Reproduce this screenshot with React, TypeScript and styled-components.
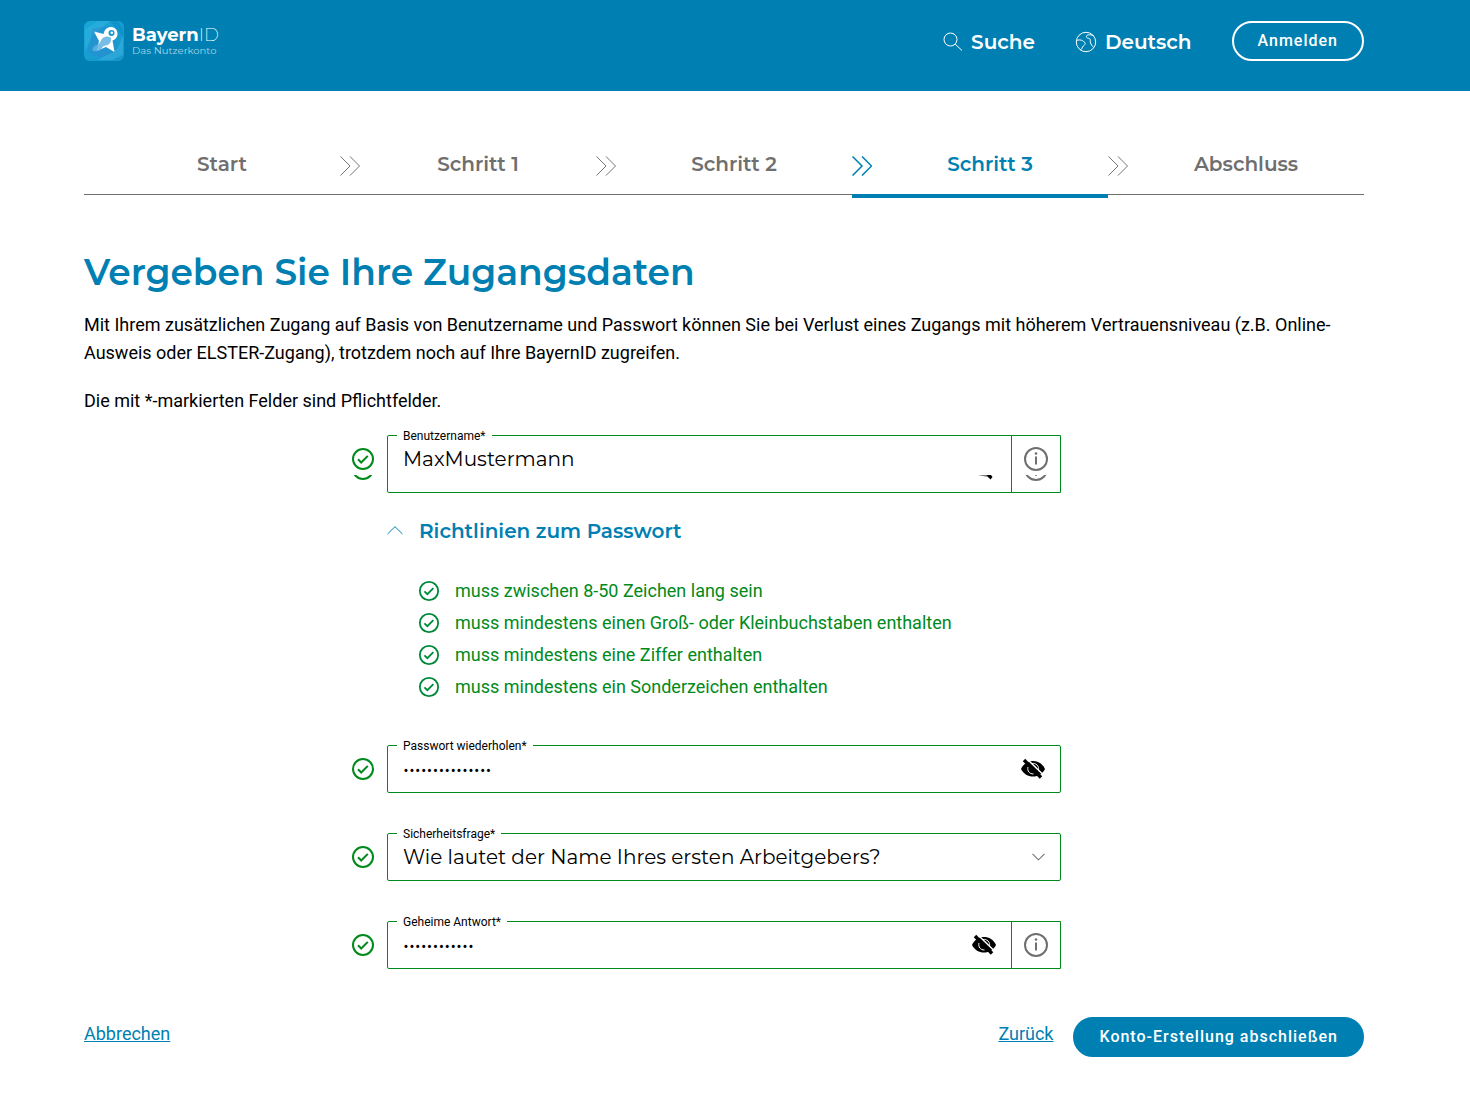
import React, { useState } from "react";
import styled, { createGlobalStyle } from "styled-components";

const blue = "#0080b2";
const green = "#008a1b";
const grey = "#6f6f6f";
const heading = `Montserrat, Inter, sans-serif`;
const body = `Roboto, sans-serif`;

const GlobalStyle = createGlobalStyle`
  *, *::before, *::after { box-sizing: border-box; }
  body { margin: 0; background: #fff; color: #000; font-family: ${body}; font-size: 18px; line-height: 28px; }
  button, input, select { font: inherit; color: inherit; margin: 0; }
  svg { display: block; flex: none; }
  p, h1, ul, ol { margin: 0; padding: 0; }
`;

const Header = styled.header`
  display: flex;
  align-items: flex-start;
  justify-content: space-between;
  padding: 21px 106px 30px 84px;
  background: ${blue};
  color: #fff;
`;

const Brand = styled.a`
  display: flex;
  align-items: center;
  gap: 8px;
  height: 40px;
  color: #fff;
  text-decoration: none;
  font-family: ${heading};
`;

const BrandText = styled.span`
  display: flex;
  flex-direction: column;
  padding-top: 2px;
`;

const BrandName = styled.span`
  font-size: 18px;
  line-height: 18px;
  font-weight: 200;
  b { font-weight: 700; }
`;

const BrandClaim = styled.span`
  font-size: 10px;
  line-height: 14px;
  font-weight: 400;
  color: #a5d3e8;
`;

const Tools = styled.nav`
  display: flex;
  align-items: center;
  gap: 40px;
  height: 40px;
`;

const ToolButton = styled.button`
  display: flex;
  align-items: center;
  gap: 8px;
  padding: 2px 0 0;
  border: 0;
  background: none;
  font: 600 20px/28px ${heading};
  cursor: pointer;
`;

const PillButton = styled.button<{ $filled?: boolean }>`
  height: 40px;
  padding: 0 24px;
  border: 2px solid ${(p) => (p.$filled ? blue : "#fff")};
  border-radius: 20px;
  background: ${(p) => (p.$filled ? blue : "transparent")};
  color: #fff;
  font: 500 16px/20px ${body};
  letter-spacing: 1px;
  cursor: pointer;
`;

const Main = styled.main`
  padding: 56px 106px 45px 84px;
`;

const Steps = styled.ol`
  display: grid;
  grid-template-columns: repeat(5, 1fr);
  align-items: start;
  list-style: none;
`;

const Step = styled.li<{ $active?: boolean }>`
  display: grid;
  grid-template-columns: 20px 1fr;
  padding: 3px 0 16px;
  border-bottom: ${(p) => (p.$active ? `4px solid ${blue}` : `1px solid ${grey}`)};
  font: 600 20px/28px ${heading};
  text-align: center;
  color: ${(p) => (p.$active ? blue : grey)};
  svg { margin-top: 6px; }
`;

const Title = styled.h1`
  margin-top: 47px;
  font: 600 36px/54px ${heading};
  color: ${blue};
`;

const Text = styled.p`
  margin-top: 12px;
  & + & { margin-top: 20px; }
`;

const Form = styled.form`
  margin-top: 20px;
`;

const Row = styled.div`
  display: grid;
  grid-template-columns: minmax(36px, 1fr) minmax(0, 674px) minmax(0, 1fr);
  & + & { margin-top: 40px; }
`;

const Status = styled.div`
  position: relative;
  justify-self: end;
  width: 24px;
  margin: 12px 12px 0 0;
`;

const Box = styled.div<{ $tall?: boolean; $square?: boolean }>`
  position: relative;
  display: flex;
  align-items: stretch;
  height: ${(p) => (p.$tall ? 58 : 48)}px;
  border: 1px solid ${green};
  border-radius: ${(p) => (p.$square ? "2px 0 0 2px" : "2px")};
`;

const Label = styled.label`
  position: absolute;
  top: -7px;
  left: 9px;
  padding: 0 6px;
  background: #fff;
  font-size: 12px;
  line-height: 14px;
`;

const Input = styled.input`
  flex: 1;
  min-width: 0;
  height: 46px;
  padding: 0 15px;
  border: 0;
  outline: 0;
  background: none;
  font: 400 20px/28px ${heading};
`;

const Select = styled.select`
  flex: 1;
  min-width: 0;
  padding: 0 15px;
  border: 0;
  outline: 0;
  appearance: none;
  background: none;
  font: 400 20px/28px ${heading};
`;

const SelectArrow = styled.span`
  display: flex;
  align-items: center;
  padding-right: 15px;
  color: ${grey};
  pointer-events: none;
`;

const IconButton = styled.button<{ $bordered?: boolean }>`
  position: relative;
  display: flex;
  align-items: flex-start;
  padding: ${(p) => (p.$bordered ? "11px 12px" : "11px 15px")};
  border: 0;
  border-left: ${(p) => (p.$bordered ? `1px solid ${green}` : "0")};
  background: none;
  cursor: pointer;
`;

const Sliver = styled.span<{ $edge: "status" | "eye" | "info" }>`
  position: absolute;
  top: ${(p) => (p.$edge === "status" ? 28 : 39)}px;
  ${(p) => ({ status: "left: 0;", eye: "right: 67px;", info: "left: 12px;" })[p.$edge]}
`;

const Rules = styled.section`
  grid-column: 2;
`;

const RulesToggle = styled.button`
  display: flex;
  align-items: center;
  gap: 16px;
  margin-top: -16px;
  padding: 0;
  border: 0;
  background: none;
  font: 600 20px/28px ${heading};
  color: ${blue};
  cursor: pointer;
`;

const RuleList = styled.ul`
  display: grid;
  gap: 4px;
  padding: 32px 0 4px 31px;
  list-style: none;
  color: ${green};
`;

const Rule = styled.li`
  display: flex;
  align-items: center;
  gap: 15px;
`;

const Actions = styled.footer`
  display: flex;
  align-items: center;
  gap: 20px;
  margin-top: 48px;
`;

const Link = styled.a<{ $push?: boolean }>`
  margin-right: ${(p) => (p.$push ? "auto" : "0")};
  padding-bottom: 6px;
  color: ${blue};
  text-decoration: underline;
`;

const Logo = () => (
  <svg width="40" height="40" viewBox="0 0 40 40" aria-hidden="true">
    <defs>
      <linearGradient id="tile" x1="0" y1="0" x2="1" y2="1">
        <stop offset="0" stopColor="#16a7d8" />
        <stop offset="1" stopColor="#1795cb" />
      </linearGradient>
    </defs>
    <rect width="40" height="40" rx="6" fill="url(#tile)" />
    <path d="M1 8 14 0h12L8 16 1 30z" fill="#35b4df" opacity=".5" />
    <path d="M39 14v20l-11 5H14l20-12z" fill="#45b8e2" opacity=".45" />
    <path d="M26 0h8l5 8v8z" fill="#0d8fc6" opacity=".7" />
    <path d="M3 31 9 8 24 5l10 4-3 22-15 6z" fill="#2a8fd0" opacity=".65" />
    <path d="M10 10.500 19.500 13C20.500 8.500 23.500 6 27 6c4 0 6.500 3 6.500 6.500 0 3.500-2 6-5 7L30.500 31 22 26 12.500 30 15 20z" fill="#fff" />
    <path d="M8.500 29.500c0-3 1.500-5 5-6 3-1 3-5 6-7 2.500-1.500 5.500-1.300 7.500.5.500 4-1.500 7-5.500 7.500-3.500.5-3 3-5.500 4.500-2.500 1.500-5.500 1.500-7.500.5z" fill="#5fb2e0" opacity=".85" />
    <circle cx="27.500" cy="12" r="3" fill="#1697ce" />
    <circle cx="27.800" cy="11.700" r="1.300" fill="#fff" />
  </svg>
);

const SearchIcon = () => (
  <svg width="20" height="20" viewBox="0 0 20 20" fill="none" stroke="currentColor" aria-hidden="true">
    <circle cx="7.500" cy="7.500" r="6.500" />
    <path d="m12.200 12.200 6.800 6.300" />
  </svg>
);

const GlobeIcon = () => (
  <svg width="22" height="22" viewBox="0 0 22 22" fill="none" stroke="currentColor" strokeLinejoin="round" aria-hidden="true">
    <circle cx="11" cy="11" r="9.700" />
    <path d="M1.500 9.500c2-.8 4.500-.8 6 .2 1 1 2.700 1.300 2.700 2.800 0 1.700-2 2-2.700 3.500-.5 1.300-.8 2.500-2.300 3" />
    <path d="M18.500 4.700c-1.500-.9-3.500-1-5.300-.8-1.600.2-2.200 1.300-1.500 2.500.8 1.200 2.400.6 3.300 1.600.8 1-.2 2.500.5 4 .6 1.400 1.300 2.700 2.500 3.800" />
  </svg>
);

const StepIcon = ({ strong }: { strong?: boolean }) => (
  <svg width="20" height="20" viewBox="0 0 21 21" fill="none" stroke="currentColor" strokeWidth={strong ? 1.6 : 1} aria-hidden="true">
    <path d="m.5.500 10 10-10 10M10.500.500l10 10-10 10" />
  </svg>
);

const CheckIcon = ({ size = 24, color = green }: { size?: number; color?: string }) => (
  <svg width={size} height={size} viewBox="0 0 24 24" fill="none" stroke={color} strokeWidth="2" aria-hidden="true">
    <circle cx="12" cy="12" r="10" />
    <path d="m7 12.300 3.200 3.200 6.600-6.600" />
  </svg>
);

const InfoIcon = () => (
  <svg width="24" height="24" viewBox="0 0 24 24" fill="none" stroke={grey} strokeWidth="2" aria-hidden="true">
    <circle cx="12" cy="12" r="11" />
    <path d="M12 9.500v8" />
    <circle cx="12" cy="6.500" r="1.300" fill={grey} stroke="none" />
  </svg>
);

const EyeOffIcon = () => (
  <svg width="24" height="24" viewBox="0 0 24 24" aria-hidden="true">
    <path d="M0 12C2.500 6.500 7 4 12 4s9.500 2.500 12 8c-2.500 5-7 7.500-12 7.500S2.500 17 0 12z" />
    <path d="M11 6.500a5.500 5.500 0 0 1 6.500 6.500" fill="none" stroke="#fff" />
    <path d="M7 10c-1 4 1.500 7 5.500 7" fill="none" stroke="#fff" />
    <path d="M5.500 1.500 23 18.500" stroke="#fff" strokeWidth="1.500" />
    <path d="M3 3 20 20.500" stroke="#000" strokeWidth="3.400" />
  </svg>
);

const Chevron = ({ up }: { up?: boolean }) => (
  <svg width={up ? 16 : 13} height={up ? 10 : 8} viewBox="0 0 16 10" fill="none" stroke="currentColor" strokeWidth={up ? 1 : 1.3} aria-hidden="true">
    <path d={up ? "M.500 8 8 .700 15.500 8" : "m.5 1 7.500 7.500L15.500 1"} />
  </svg>
);

const steps = ["Start", "Schritt 1", "Schritt 2", "Schritt 3", "Abschluss"];
const rules = [
  "muss zwischen 8-50 Zeichen lang sein",
  "muss mindestens einen Groß- oder Kleinbuchstaben enthalten",
  "muss mindestens eine Ziffer enthalten",
  "muss mindestens ein Sonderzeichen enthalten",
];

export default function App() {
  const [open, setOpen] = useState(true);
  return (
    <>
      <GlobalStyle />
      <Header>
        <Brand href="#">
          <Logo />
          <BrandText>
            <BrandName><b>Bayern</b>ID</BrandName>
            <BrandClaim>Das Nutzerkonto</BrandClaim>
          </BrandText>
        </Brand>
        <Tools>
          <ToolButton><SearchIcon />Suche</ToolButton>
          <ToolButton><GlobeIcon />Deutsch</ToolButton>
          <PillButton>Anmelden</PillButton>
        </Tools>
      </Header>
      <Main>
        <Steps>
          {steps.map((name, i) => (
            <Step key={name} $active={i === 3}>
              {i > 0 ? <StepIcon strong={i === 3} /> : <span />}
              <span>{name}</span>
            </Step>
          ))}
        </Steps>
        <Title>Vergeben Sie Ihre Zugangsdaten</Title>
        <Text>
          Mit Ihrem zusätzlichen Zugang auf Basis von Benutzername und Passwort können Sie bei Verlust eines
          Zugangs mit höherem Vertrauensniveau (z.B. Online-Ausweis oder ELSTER-Zugang), trotzdem noch auf Ihre
          BayernID zugreifen.
        </Text>
        <Text>Die mit *-markierten Felder sind Pflichtfelder.</Text>
        <Form onSubmit={(e) => e.preventDefault()}>
          <Row>
            <Status>
              <CheckIcon />
              <Sliver $edge="status">
                <svg width="24" height="6" viewBox="0 17 24 6" fill="none" stroke={green} strokeWidth="2">
                  <circle cx="12" cy="11" r="10" />
                </svg>
              </Sliver>
            </Status>
            <Box $tall $square>
              <Label htmlFor="user">Benutzername*</Label>
              <Input id="user" defaultValue="MaxMustermann" />
              <Sliver $edge="eye">
                <svg width="15" height="5" viewBox="0 0 15 5">
                  <path d="M0 .5h8L10 0h3l1.500 2-2 2.500L9.500 1.500z" />
                </svg>
              </Sliver>
              <IconButton type="button" $bordered aria-label="Hinweis zum Benutzernamen">
                <InfoIcon />
                <Sliver $edge="info">
                  <svg width="24" height="7" viewBox="0 17 24 7" fill="none" stroke={grey} strokeWidth="2">
                    <circle cx="12" cy="11" r="11" />
                    <path d="M12 16v1.800" />
                  </svg>
                </Sliver>
              </IconButton>
            </Box>
          </Row>
          <Row>
            <Rules>
              <RulesToggle type="button" aria-expanded={open} onClick={() => setOpen(!open)}>
                <Chevron up />
                Richtlinien zum Passwort
              </RulesToggle>
              {open && (
                <RuleList>
                  {rules.map((r) => (
                    <Rule key={r}><CheckIcon size={22} color="#008a3c" />{r}</Rule>
                  ))}
                </RuleList>
              )}
            </Rules>
          </Row>
          <Row>
            <Status><CheckIcon /></Status>
            <Box>
              <Label htmlFor="repeat">Passwort wiederholen*</Label>
              <Input id="repeat" type="password" defaultValue="Passwort-123456" />
              <IconButton type="button" aria-label="Passwort anzeigen"><EyeOffIcon /></IconButton>
            </Box>
          </Row>
          <Row>
            <Status><CheckIcon /></Status>
            <Box>
              <Label htmlFor="question">Sicherheitsfrage*</Label>
              <Select id="question">
                <option>Wie lautet der Name Ihres ersten Arbeitgebers?</option>
              </Select>
              <SelectArrow><Chevron /></SelectArrow>
            </Box>
          </Row>
          <Row>
            <Status><CheckIcon /></Status>
            <Box $square>
              <Label htmlFor="answer">Geheime Antwort*</Label>
              <Input id="answer" type="password" defaultValue="Musterfirma1" />
              <IconButton type="button" aria-label="Antwort anzeigen"><EyeOffIcon /></IconButton>
              <IconButton type="button" $bordered aria-label="Hinweis zur Antwort"><InfoIcon /></IconButton>
            </Box>
          </Row>
          <Actions>
            <Link href="#" $push>Abbrechen</Link>
            <Link href="#">Zurück</Link>
            <PillButton $filled>Konto-Erstellung abschließen</PillButton>
          </Actions>
        </Form>
      </Main>
    </>
  );
}
